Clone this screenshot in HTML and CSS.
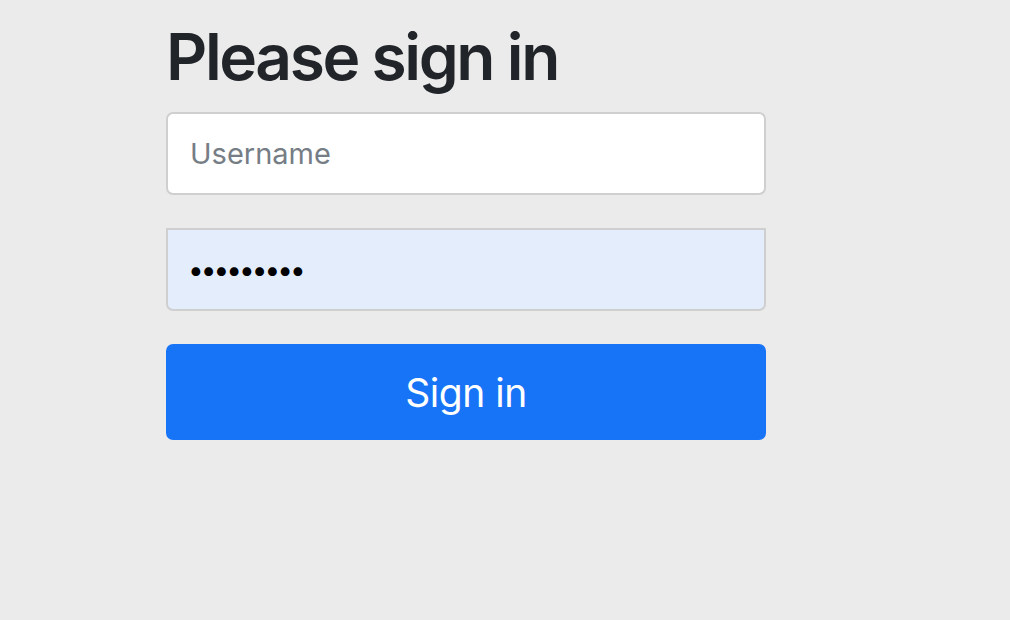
FILE: index.html
```html
<!DOCTYPE html>
<html>
<head>
<meta charset="utf-8">
<link rel="stylesheet" href="styles.css">
</head>
<body>
<div class="page">
  <form class="signin">
    <h2 class="title">Please sign in</h2>
    <div class="field"><input class="input" type="text" placeholder="Username"></div>
    <div class="field"><input class="input input-filled" type="password" value="password1"></div>
    <button class="btn" type="button">Sign in</button>
  </form>
</div>
</body>
</html>
```
FILE: styles.css
```css
html, body {
  margin: 0;
  padding: 0;
  background: #ebebeb;
  height: 100%;
}
.page {
  padding: 18px 0 0 166px;
  font-family: Inter, "Noto Sans", sans-serif;
}
.signin {
  width: 600px;
  display: flex;
  flex-direction: column;
  gap: 33px;
}
.title {
  margin: 0 0 -16px 0;
  font-size: 64px;
  line-height: 77px;
  font-weight: 600;
  color: #212529;
  letter-spacing: -2.4px;
}
.field {
  display: flex;
}
.input {
  box-sizing: border-box;
  width: 600px;
  height: 83px;
  border: 2px solid #cfcfcf;
  border-radius: 7px;
  background: #fff;
  padding: 0 22px;
  font-family: Inter, "Noto Sans", sans-serif;
  font-size: 29px;
  color: #212529;
  outline: none;
}
.input::placeholder {
  color: #767d85;
}
.input-filled {
  background: #e3edfb;
  border-radius: 0 0 7px 7px;
  padding-left: 20px;
  font-size: 28px;
  letter-spacing: -3px;
  color: #000;
}
.btn {
  box-sizing: border-box;
  width: 600px;
  height: 96px;
  border: none;
  border-radius: 7px;
  background: #1874f6;
  color: #fff;
  font-family: Inter, "Noto Sans", sans-serif;
  font-size: 39px;
  letter-spacing: -0.5px;
  padding: 0;
}
```
